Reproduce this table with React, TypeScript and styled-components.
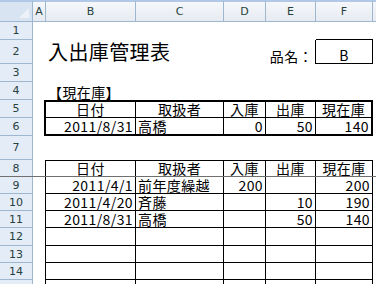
import React from 'react';
import styled, { createGlobalStyle } from 'styled-components';

type Align = 'left' | 'center' | 'right';

interface CellSpec {
  text?: string;
  align?: Align;
  t?: number;
  r?: number;
  b?: number;
  big?: boolean;
}

const GlobalStyle = createGlobalStyle`
  html, body {
    margin: 0;
    padding: 0;
    background: #fff;
    overflow: hidden;
  }
  body {
    font-family: "MS PGothic", "Noto Sans CJK JP", sans-serif;
  }
`;

const COL_LETTERS = ['A', 'B', 'C', 'D', 'E', 'F', ''];
const ROW_HEIGHTS = [18, 24, 18, 18, 18, 18, 24, 17, 17, 17, 17, 18, 17, 17, 18];

// sheet content, columns A..G
const e = (): CellSpec => ({});
const head = (text: string, r = 1, t = 1): CellSpec => ({ text, align: 'center', r, t, b: 1 });
const num = (text: string, b = 1, r = 1): CellSpec => ({ text, align: 'right', r, b });
const name = (text: string, b = 1): CellSpec => ({ text, align: 'left', r: 1, b });

const blankRow = (): CellSpec[] => [
  { r: 1 },
  num('', 1),
  name('', 1),
  num('', 1),
  num('', 1),
  num('', 1),
  e(),
];

const SHEET: CellSpec[][] = [
  [e(), e(), e(), e(), e(), { b: 1 }, e()],
  [
    e(),
    { text: '入出庫管理表', align: 'left', big: true },
    e(),
    e(),
    { text: '品名：', align: 'right', r: 1 },
    { text: 'B', align: 'center', r: 1, b: 1 },
    e(),
  ],
  [e(), e(), e(), e(), e(), e(), e()],
  [e(), { text: '【現在庫】', align: 'left' }, e(), e(), e(), e(), e()],
  [{ r: 2 }, head('日付', 1, 2), head('取扱者', 1, 2), head('入庫', 1, 2), head('出庫', 1, 2), head('現在庫', 2, 2), e()],
  [{ r: 2 }, num('2011/8/31', 2), name('高橋', 2), num('0', 2), num('50', 2), num('140', 2, 2), e()],
  [e(), e(), e(), e(), e(), e(), e()],
  [{ r: 1 }, head('日付'), head('取扱者'), head('入庫'), head('出庫'), head('現在庫'), e()],
  [{ r: 1 }, num('2011/4/1'), name('前年度繰越'), num('200'), num(''), num('200'), e()],
  [{ r: 1 }, num('2011/4/20'), name('斉藤'), num(''), num('10'), num('190'), e()],
  [{ r: 1 }, num('2011/8/31'), name('高橋'), num(''), num('50'), num('140'), e()],
  blankRow(),
  blankRow(),
  blankRow(),
  blankRow(),
];

const Sheet = styled.div`
  position: relative;
  display: grid;
  grid-template-columns: 33px 13px 90px 88px 42px 50px 57px 1fr;
  grid-template-rows: 22px ${ROW_HEIGHTS.map(h => `${h}px`).join(' ')};
  width: 376px;
  height: 284px;
  overflow: hidden;
  background: #fff;
`;

const Corner = styled.div`
  position: relative;
  box-sizing: border-box;
  border-top: 2px solid #b1c8e6;
  border-right: 1px solid #9eb6ce;
  border-bottom: 1px solid #9eb6ce;
  background: #d9e4f2;

  &:after {
    content: '';
    position: absolute;
    right: 3px;
    bottom: 3px;
    border-left: 10px solid transparent;
    border-bottom: 10px solid #eef2f8;
  }
`;

const ColHeader = styled.div`
  box-sizing: border-box;
  display: flex;
  align-items: center;
  justify-content: center;
  border-top: 2px solid #b1c8e6;
  border-right: 1px solid #9eb6ce;
  border-bottom: 1px solid #9eb6ce;
  background: linear-gradient(#f5f7fa, #e6ebf2);
  color: #27413e;
  font-family: "DejaVu Sans", sans-serif;
  font-size: 11px;
  line-height: 12px;
  padding-top: 1px;
`;

const RowHeader = styled.div`
  box-sizing: border-box;
  display: flex;
  align-items: center;
  justify-content: center;
  border-right: 1px solid #9eb6ce;
  border-bottom: 1px solid #9eb6ce;
  background: #e4ecf7;
  color: #27413e;
  font-family: "DejaVu Sans", sans-serif;
  font-size: 11px;
  line-height: 12px;
  padding-top: 1px;
`;

const Cell = styled.div<{ $align: Align; $t: number; $r: number; $b: number; $big: boolean }>`
  box-sizing: border-box;
  display: flex;
  align-items: flex-end;
  justify-content: ${p =>
    p.$align === 'right' ? 'flex-end' : p.$align === 'center' ? 'center' : 'flex-start'};
  border-top: ${p => p.$t}px solid #000;
  border-right: ${p => p.$r}px solid #000;
  border-bottom: ${p => p.$b}px solid #000;
  padding: 0 2px 1px;
  color: #000;
  font-size: ${p => (p.$big ? 20 : 14)}px;
  line-height: ${p => (p.$big ? 22 : 14)}px;
  letter-spacing: 0.4px;
  white-space: nowrap;
  overflow: visible;
  min-width: 0;
`;

const FreezeLine = styled.div`
  position: absolute;
  left: 0;
  right: 0;
  top: 176px;
  height: 1px;
  background: #6f6f6f;
  pointer-events: none;
`;

export default function App() {
  return (
    <>
      <GlobalStyle />
      <Sheet>
        <Corner />
        {COL_LETTERS.map((l, i) => (
          <ColHeader key={`h${i}`}>{l}</ColHeader>
        ))}
        {SHEET.map((row, ri) => (
          <React.Fragment key={`r${ri}`}>
            {/* the 15th row is only a sliver at the bottom edge */}
            <RowHeader>{ri < 14 ? ri + 1 : ''}</RowHeader>
            {row.map((c, ci) => (
              <Cell
                key={`c${ri}-${ci}`}
                $align={c.align ?? 'left'}
                $t={c.t ?? 0}
                $r={c.r ?? 0}
                $b={c.b ?? 0}
                $big={!!c.big}
              >
                {c.text}
              </Cell>
            ))}
          </React.Fragment>
        ))}
        <FreezeLine />
      </Sheet>
    </>
  );
}
